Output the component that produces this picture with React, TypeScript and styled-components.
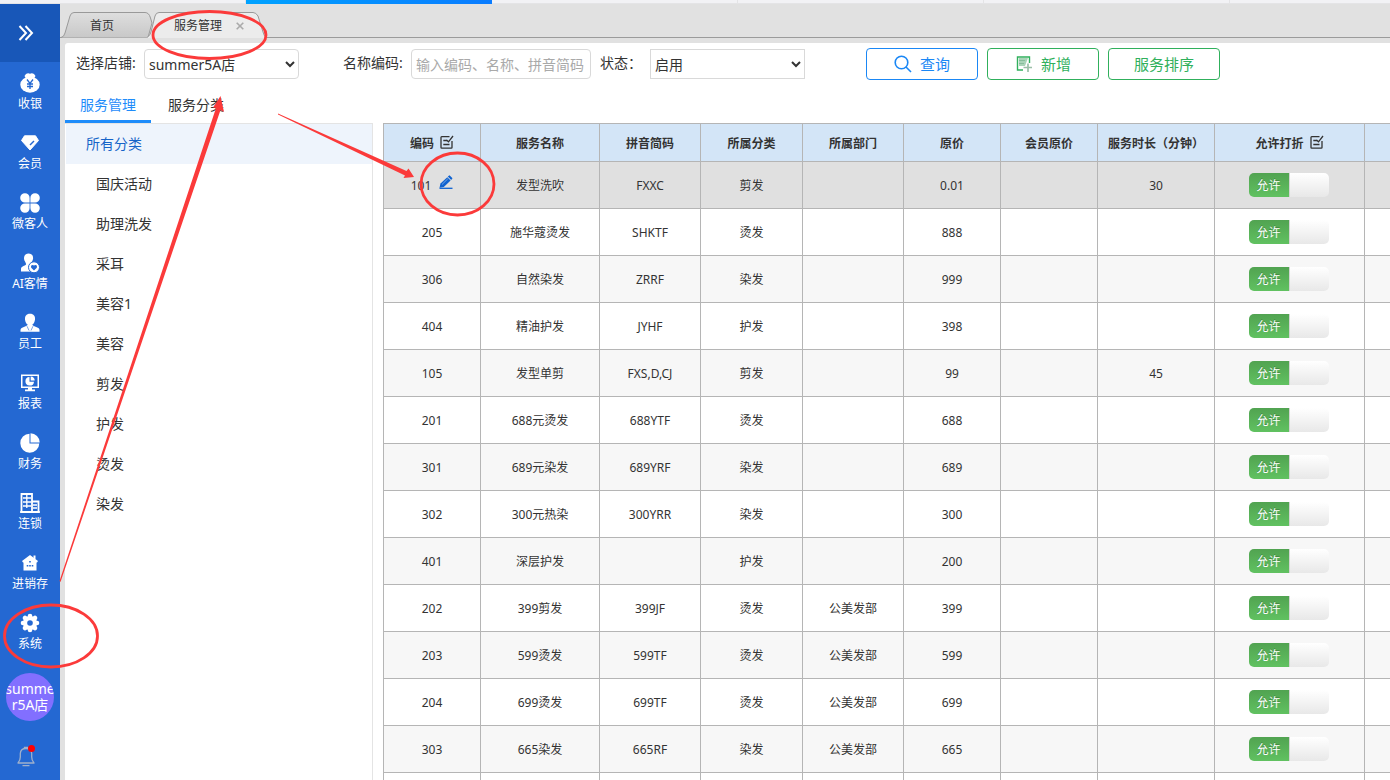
import React from 'react';
import styled, { createGlobalStyle, css } from 'styled-components';

const GlobalStyle = createGlobalStyle`
  * { box-sizing: border-box; }
  html, body, #root { height: 100%; }
  body {
    margin: 0;
    overflow: hidden;
    background: #e1e1e1;
    color: #333;
    font-family: "Noto Sans", "Noto Sans CJK SC", sans-serif;
    font-size: 14px;
    line-height: 20px;
  }
  button, input, select { font: inherit; color: inherit; margin: 0; }
  a { color: inherit; text-decoration: none; }
`;

const Page = styled.div`
  position: relative;
  display: flex;
  flex-direction: column;
  height: 100vh;
  overflow: hidden;
`;

const Strip = styled.div`
  display: flex;
  flex: none;
  height: 4px;
  background: #f2f2f5;
  overflow: hidden;
`;

const StripCell = styled.div<{ $active?: boolean }>`
  flex: none;
  width: 246px;
  border-bottom: 1px solid #e4e4e6;
  border-right: 1px solid #e4e4e6;
  ${p => p.$active && css`
    border: 0;
    background: linear-gradient(90deg, #00a2ff, #0a7cff);
  `}
`;

const Shell = styled.div`
  display: flex;
  flex: 1;
  min-height: 0;
`;

const Sidebar = styled.nav`
  display: flex;
  flex-direction: column;
  align-items: center;
  flex: none;
  width: 60px;
  background: #2468d2;
  color: #fff;
`;

const Expand = styled.button`
  display: flex;
  align-items: center;
  justify-content: center;
  flex: none;
  width: 100%;
  height: 58px;
  padding: 0 8px 0 0;
  border: 0;
  background: #1857b8;
  color: #fff;
`;

const NavItem = styled.a`
  display: flex;
  flex-direction: column;
  align-items: center;
  gap: 1px;
  flex: none;
  width: 100%;
  height: 60px;
  padding-top: 11px;
  font-size: 12px;
  white-space: nowrap;
  svg { display: block; flex: none; }
`;

const Avatar = styled.div`
  display: flex;
  justify-content: center;
  flex: none;
  width: 48px;
  height: 48px;
  margin-top: 11px;
  padding-top: 8px;
  border-radius: 50%;
  background: #826fff;
  overflow: hidden;
`;

const AvatarName = styled.span`
  flex: none;
  width: 54px;
  line-height: 16px;
  text-align: center;
  word-break: break-all;
`;

const Bell = styled.button`
  position: relative;
  margin: 24px 8px 0 0;
  padding: 0;
  border: 0;
  background: none;
  color: #9fb0cc;
  svg { display: block; }
`;

const BellDot = styled.span`
  position: absolute;
  top: 0;
  right: 0;
  width: 7px;
  height: 7px;
  border-radius: 50%;
  background: #f00;
`;

const Main = styled.main`
  display: flex;
  flex-direction: column;
  flex: 1;
  min-width: 0;
  padding-left: 5px;
`;

const TabBar = styled.div`
  display: flex;
  align-items: flex-end;
  flex: none;
  height: 34px;
  margin: 0 0 5px -5px;
  border-bottom: 1px solid #9b9b9b;
`;

const PageTab = styled.div<{ $active?: boolean }>`
  position: relative;
  display: flex;
  align-items: center;
  justify-content: center;
  gap: 14px;
  flex: none;
  width: ${p => (p.$active ? 120 : 92)}px;
  height: 26px;
  margin: 0 0 -1px ${p => (p.$active ? '-6px' : '1px')};
  padding: ${p => (p.$active ? '2px 0 0 4px' : '2px 10px 0 0')};
  font-size: 12px;
  z-index: ${p => (p.$active ? 1 : 0)};
`;

const TabShape = styled.svg`
  position: absolute;
  inset: 0;
  width: 100%;
  height: 100%;
`;

const TabLabel = styled.a`
  position: relative;
`;

const TabClose = styled.button`
  position: relative;
  padding: 0;
  border: 0;
  background: none;
  color: #aaa;
  svg { display: block; }
`;

const Panel = styled.section`
  display: flex;
  flex-direction: column;
  flex: 1;
  min-height: 0;
  background: #fff;
  border-top-left-radius: 3px;
`;

const Toolbar = styled.form`
  display: flex;
  align-items: center;
  flex: none;
  height: 42px;
  padding-left: 11px;
  white-space: nowrap;
`;

const FieldLabel = styled.label<{ $narrow?: boolean }>`
  flex: none;
  width: ${p => (p.$narrow ? 50 : 68)}px;
  padding-bottom: 2px;
`;

const controlStyle = css`
  flex: none;
  height: 30px;
  border: 1px solid #d9d9d9;
  background-color: #fff;
`;

const Select = styled.select<{ $square?: boolean; $gap: number }>`
  ${controlStyle}
  width: 155px;
  margin-right: ${p => p.$gap}px;
  padding: 0;
  border-radius: ${p => (p.$square ? 0 : 4)}px;
`;

const TextInput = styled.input`
  ${controlStyle}
  width: 180px;
  margin-right: 9px;
  padding: 0 4px;
  border-radius: 4px;
  &::placeholder { color: #a9a9a9; opacity: 1; }
`;

const Actions = styled.div`
  display: flex;
  gap: 9px;
`;

const ActionButton = styled.button<{ $primary?: boolean }>`
  display: flex;
  align-items: center;
  justify-content: center;
  gap: 8px;
  width: 112px;
  height: 32px;
  padding: 0;
  border: 1px solid ${p => (p.$primary ? '#1a87f5' : '#30b05c')};
  border-radius: 4px;
  background: #fff;
  color: ${p => (p.$primary ? '#1a87f5' : '#30b05c')};
  font-size: 15px;
`;

const SubTabs = styled.div`
  display: flex;
  flex: none;
  height: 38px;
`;

const SubTab = styled.a<{ $active?: boolean }>`
  height: 38px;
  padding: 10px 15px 0;
  margin-right: 2px;
  ${p => p.$active && css`
    color: #1e8cfa;
    border-bottom: 3px solid #1e8cfa;
  `}
`;

const Content = styled.div`
  display: flex;
  gap: 10px;
  flex: 1;
  min-height: 0;
`;

const Categories = styled.ul`
  flex: none;
  width: 308px;
  margin: 0;
  padding: 0 0 0 1px;
  border-top: 1px solid #e4e4e4;
  border-right: 1px solid #e4e4e4;
  list-style: none;
`;

const Category = styled.li<{ $root?: boolean }>`
  height: 40px;
  padding-left: ${p => (p.$root ? 20 : 30)}px;
  background: ${p => (p.$root ? '#eef4fc' : 'none')};
  color: ${p => (p.$root ? '#1664c8' : '#333')};
  line-height: 40px;
`;

const TableWrap = styled.div`
  flex: 1;
  min-width: 0;
  overflow: hidden;
`;

const Table = styled.table`
  width: 1131px;
  table-layout: fixed;
  border-collapse: collapse;
  font-size: 12px;
  text-align: center;
`;

const Th = styled.th`
  height: 38px;
  padding: 2px 0 0;
  border: 1px solid #b5b5b5;
  background: #d3e5f7;
  font-weight: 600;
  white-space: nowrap;
`;

const HeadCell = styled.span`
  display: inline-flex;
  align-items: flex-start;
  gap: 6px;
  svg { display: block; }
`;

const Tr = styled.tr<{ $selected?: boolean }>`
  background: #fff;
  &:nth-child(odd) { background: ${p => (p.$selected ? '#e0e0e0' : '#f7f7f7')}; }
`;

const Td = styled.td`
  height: 47px;
  padding: 2px 0 0;
  border: 1px solid #b5b5b5;
  white-space: nowrap;
`;

const SwitchTd = styled(Td)`
  padding: 0 2px 0 0;
`;

const CodeCell = styled.span`
  display: inline-flex;
  align-items: center;
  gap: 8px;
`;

const EditButton = styled.button`
  padding: 0 0 8px;
  border: 0;
  background: none;
  svg { display: block; }
`;

const Switch = styled.label`
  display: inline-grid;
  grid-template-columns: 40px 40px;
  height: 24px;
  border-radius: 5px;
  overflow: hidden;
  vertical-align: middle;
  line-height: 26px;
`;

const SwitchInput = styled.input`
  grid-area: 1 / 1 / 2 / 3;
  appearance: none;
`;

const SwitchOn = styled.span`
  grid-area: 1 / 1;
  background: linear-gradient(#51a351, #62c462);
  color: #fff;
  text-shadow: 0 -1px 0 rgba(0, 0, 0, 0.25);
`;

const SwitchKnob = styled.span`
  grid-area: 1 / 2;
  border-left: 1px solid #d4d4d4;
  background: linear-gradient(#fff, #e6e6e6);
`;

const Annotations = styled.svg`
  position: absolute;
  top: 0;
  left: 0;
  pointer-events: none;
  z-index: 5;
`;

const BG = '#2468d2';

const icons: Record<string, React.ReactNode> = {
  cash: (
    <>
      <path d="M6 1 Q8 -.3 10 .7 Q12 -.3 14 1 L15.500 3 L14 5.500 H6 L4.500 3Z" fill="#fff" />
      <ellipse cx="10" cy="11.700" rx="9.700" ry="8" fill="#fff" />
      <path d="M7 6.500 L10 10.500 L13 6.500 M10 10.500 V16 M7 11 H13 M7 13.500 H13" fill="none" stroke={BG} strokeWidth="1.300" />
    </>
  ),
  member: (
    <>
      <path d="M4.500 2.800 H15.500 L18.500 7.500 L10 17 L1.500 7.500Z" fill="#fff" stroke="#fff" strokeLinejoin="round" />
      <path d="M10 12 L14 8" stroke={BG} strokeWidth="1.400" />
    </>
  ),
  wechat: (
    <g fill="#fff">
      <path d="M9.600 9.600 H5 A4.700 4.700 0 1 1 9.600 5Z" />
      <path d="M10.400 9.600 H15 A4.700 4.700 0 1 0 10.400 5Z" />
      <path d="M9.600 10.400 H5 A4.700 4.700 0 1 0 9.600 15Z" />
      <path d="M10.400 10.400 H15 A4.700 4.700 0 1 1 10.400 15Z" />
    </g>
  ),
  ai: (
    <>
      <path d="M8.500 .5 C12 .5 13.500 3 13 6 C12.700 8 11.500 9 11 10.500 L14 13 V18.500 H1 V16 C1 13 5 13 6 11.500 C6.500 10 4 8 4 5.500 C4 2.500 5.500 .5 8.500 .5Z" fill="#fff" />
      <circle cx="14" cy="14.300" r="5.500" fill="#fff" stroke={BG} />
      <path d="M14 17.500 L11.200 14.700 Q10.500 12.200 12.500 12 Q13.500 12 14 12.500 Q14.500 12 15.500 12 Q17.500 12.200 16.800 14.700Z" fill={BG} />
    </>
  ),
  staff: (
    <>
      <path d="M10 .8 C13.800 .8 15.300 3.300 15 6.500 C14.700 9.500 12.700 12.500 10 12.500 C7.300 12.500 5.300 9.500 5 6.500 C4.700 3.300 6.200 .8 10 .8Z" fill="#fff" />
      <path d="M.5 18.700 V17 C.5 14 5.500 14 7.500 12 H12.500 C14.500 14 19.500 14 19.500 17 V18.700Z" fill="#fff" />
      <path d="M7 13.200 L9 17.500 M13 13.200 L11 17.500" stroke={BG} strokeWidth=".6" />
    </>
  ),
  report: (
    <>
      <path d="M1 1.500 H19 V15 H1Z" fill="#fff" />
      <path d="M2.500 3 H17.500 V13.500 H2.500Z" fill={BG} />
      <path d="M9.500 4 A4.300 4.300 0 1 0 14 8.700 H9.500Z" fill="#fff" />
      <path d="M10.700 3.400 A4.300 4.300 0 0 1 14.700 7.600 H10.700Z" fill="#fff" />
      <path d="M8 15 H12 V16.500 H15 V18.200 H5 V16.500 H8Z" fill="#fff" />
    </>
  ),
  finance: (
    <>
      <path d="M9.500 .7 V10.500 H19.300 A9.500 9.500 0 1 1 9.500 .7Z" fill="#fff" />
      <path d="M10.500 .3 A9.200 9.200 0 0 1 19.700 9.500 H10.500Z" fill="#fff" />
    </>
  ),
  chain: (
    <g fill="none" stroke="#fff">
      <path d="M1.500 1 H12 V19 H1.500Z" strokeWidth="1.800" />
      <path d="M12 8.500 H18.500 V19 H12" strokeWidth="1.800" />
      <path d="M3 5 H11 M3 9 H11 M3 13 H11 M6.800 2 V15 M13 12 H17 M13 15 H17" strokeWidth="1.300" />
      <path d="M0 19 H20" strokeWidth="1.600" />
    </g>
  ),
  stock: (
    <>
      <path d="M10 2 L18 8 L17 9.500 H16.500 V17.500 H3.500 V9.500 H3 L2 8Z" fill="#fff" />
      <path d="M13.500 2.500 H15.500 V6 H13.500Z" fill="#fff" />
      <path d="M9.200 8 H10.800 V9.600 H9.200Z M6.700 12 H8.300 V13.600 H6.700Z M9.200 12 H10.800 V13.600 H9.200Z M11.700 12 H13.300 V13.600 H11.700Z" fill={BG} />
    </>
  ),
  system: (
    <>
      <g stroke="#fff" strokeWidth="4.600" strokeLinecap="round">
        <path d="M10 3 V17 M3 10 H17 M5 5 L15 15 M15 5 L5 15" />
      </g>
      <circle cx="10" cy="10" r="7" fill="#fff" />
      <circle cx="10" cy="10" r="2.800" fill={BG} />
    </>
  ),
};

const navItems = [
  ['cash', '收银'], ['member', '会员'], ['wechat', '微客人'], ['ai', 'AI客情'], ['staff', '员工'],
  ['report', '报表'], ['finance', '财务'], ['chain', '连锁'], ['stock', '进销存'], ['system', '系统'],
];

const categories = ['国庆活动', '助理洗发', '采耳', '美容1', '美容', '剪发', '护发', '烫发', '染发'];

const columns = [
  { title: '编码', width: 97, editable: true },
  { title: '服务名称', width: 119 },
  { title: '拼音简码', width: 101 },
  { title: '所属分类', width: 102 },
  { title: '所属部门', width: 101 },
  { title: '原价', width: 97 },
  { title: '会员原价', width: 97 },
  { title: '服务时长（分钟）', width: 117 },
  { title: '允许打折', width: 150, editable: true },
  { title: '', width: 150 },
];

const rows = [
  ['101', '发型洗吹', 'FXXC', '剪发', '', '0.01', '', '30'],
  ['205', '施华蔻烫发', 'SHKTF', '烫发', '', '888', '', ''],
  ['306', '自然染发', 'ZRRF', '染发', '', '999', '', ''],
  ['404', '精油护发', 'JYHF', '护发', '', '398', '', ''],
  ['105', '发型单剪', 'FXS,D,CJ', '剪发', '', '99', '', '45'],
  ['201', '688元烫发', '688YTF', '烫发', '', '688', '', ''],
  ['301', '689元染发', '689YRF', '染发', '', '689', '', ''],
  ['302', '300元热染', '300YRR', '染发', '', '300', '', ''],
  ['401', '深层护发', '', '护发', '', '200', '', ''],
  ['202', '399剪发', '399JF', '烫发', '公美发部', '399', '', ''],
  ['203', '599烫发', '599TF', '烫发', '公美发部', '599', '', ''],
  ['204', '699烫发', '699TF', '烫发', '公美发部', '699', '', ''],
  ['303', '665染发', '665RF', '染发', '公美发部', '665', '', ''],
];

const EditMark = () => (
  <svg width="14" height="16" viewBox="0 0 14 16" fill="none" stroke="#333" strokeWidth="1.300">
    <path d="M9.500 2.700 H1.700 Q1 2.700 1 3.400 V13.500 Q1 14.200 1.700 14.200 H11.300 Q12 14.200 12 13.500 V7" />
    <path d="M3.300 6.500 H7 M3.300 10.500 H9.500" />
    <path d="M6.500 6 L8.500 7.800 L13 2" />
  </svg>
);

const Pencil = () => (
  <svg width="14" height="14" viewBox="0 0 14 14">
    <path d="M8.300 2.200 L11.600 5.400 L4.800 12 L.5 12.800 L1.500 8.500Z" fill="#0f62d0" />
    <path d="M8.800 1.600 L10.500 .2 L13.500 3.200 L12.200 4.900Z" fill="#0f62d0" />
    <path d="M3 9.500 L8.800 3.800" stroke="#8db6ea" strokeWidth=".8" />
    <path d="M.5 13.300 H13.500" stroke="#0f62d0" strokeWidth="1.300" />
  </svg>
);

export default function App() {
  return (
    <Page>
      <GlobalStyle />
      <Strip>
        {[0, 1, 2, 3, 4, 5].map(i => <StripCell key={i} $active={i === 1} />)}
      </Strip>
      <Shell>
        <Sidebar>
          <Expand type="button" aria-label="展开">
            <svg width="16" height="16" viewBox="0 0 16 16" fill="none" stroke="#fff" strokeWidth="2">
              <path d="M1.500 1 L8 8 L1.500 15 M7.500 1 L14 8 L7.500 15" />
            </svg>
          </Expand>
          {navItems.map(([key, label]) => (
            <NavItem key={key} href="#">
              <svg width="20" height="20" viewBox="0 0 20 20">{icons[key]}</svg>
              {label}
            </NavItem>
          ))}
          <Avatar><AvatarName>summer5A店</AvatarName></Avatar>
          <Bell type="button" aria-label="通知">
            <svg width="18" height="22" viewBox="0 0 18 22" fill="none" stroke="currentColor" strokeWidth="1.300">
              <path d="M1 18 Q3.300 15.500 3.300 12 V8.500 Q3.500 3.500 9 3.500 Q14.500 3.500 14.700 8.500 V12 Q14.700 15.500 17 18Z" strokeLinejoin="round" />
              <path d="M7.500 3.500 V2.300 H10.500 V3.500 M5.500 20.700 H12.500" />
            </svg>
            <BellDot />
          </Bell>
        </Sidebar>
        <Main>
          <TabBar>
            <PageTab>
              <TabShape viewBox="0 0 92 26" preserveAspectRatio="none">
                <defs>
                  <linearGradient id="tabIdle" x1="0" y1="0" x2="0" y2="1">
                    <stop offset="0" stopColor="#dedede" />
                    <stop offset="1" stopColor="#c8c8c8" />
                  </linearGradient>
                </defs>
                <path d="M0 25.500 Q3 25 4 21 L9 4 Q10 .5 13 .5 H84 Q88 .5 89.500 6 L91 11 L87 25.500" fill="url(#tabIdle)" stroke="#999" />
              </TabShape>
              <TabLabel href="#">首页</TabLabel>
            </PageTab>
            <PageTab $active>
              <TabShape viewBox="0 0 120 26" preserveAspectRatio="none">
                <path d="M0 25.500 Q3 24 4 20 L8 4 Q9 .5 12 .5 H106 Q109 .5 111 4 L116 20 Q117 25 120 25.500 V26 H0Z" fill="#ececec" />
                <path d="M0 25.500 Q3 24 4 20 L8 4 Q9 .5 12 .5 H106 Q109 .5 111 4 L116 20 Q117 25 120 25.500" fill="none" stroke="#999" />
              </TabShape>
              <TabLabel href="#">服务管理</TabLabel>
              <TabClose type="button" aria-label="关闭">
                <svg width="8" height="8" viewBox="0 0 8 8" stroke="#aaa" strokeWidth="1.600">
                  <path d="M.7 .7 L7.300 7.300 M7.300 .7 L.7 7.300" />
                </svg>
              </TabClose>
            </PageTab>
          </TabBar>
          <Panel>
            <Toolbar onSubmit={e => e.preventDefault()}>
              <FieldLabel htmlFor="shop">选择店铺:</FieldLabel>
              <Select id="shop" $gap={44}><option>summer5A店</option></Select>
              <FieldLabel htmlFor="keyword">名称编码:</FieldLabel>
              <TextInput id="keyword" placeholder="输入编码、名称、拼音简码" />
              <FieldLabel htmlFor="status" $narrow>状态：</FieldLabel>
              <Select id="status" $square $gap={61}><option>启用</option><option>停用</option></Select>
              <Actions>
                <ActionButton $primary>
                  <svg width="18" height="18" viewBox="0 0 18 18" fill="none" stroke="currentColor" strokeWidth="1.600">
                    <circle cx="7.500" cy="7.500" r="6.300" />
                    <path d="M12 12 L17 17" />
                  </svg>
                  查询
                </ActionButton>
                <ActionButton type="button">
                  <svg width="18" height="18" viewBox="0 0 18 18" fill="none" stroke="#30b05c">
                    <path d="M8 15 H2.500 V2 H14.500 V8" strokeWidth="1.400" />
                    <path d="M4 3 H13 L10 11 H4Z" fill="#a9d4b8" stroke="none" />
                    <path d="M4 5.500 H10 M4 8.500 H9" stroke="#7fb894" strokeWidth=".8" />
                    <path d="M8.500 12.500 H17 M13 8.500 V17" stroke="#9bbfa8" strokeWidth="1.700" />
                  </svg>
                  新增
                </ActionButton>
                <ActionButton type="button">服务排序</ActionButton>
              </Actions>
            </Toolbar>
            <SubTabs>
              <SubTab href="#" $active>服务管理</SubTab>
              <SubTab href="#">服务分类</SubTab>
            </SubTabs>
            <Content>
              <Categories>
                <Category $root><a href="#">所有分类</a></Category>
                {categories.map(c => <Category key={c}><a href="#">{c}</a></Category>)}
              </Categories>
              <TableWrap>
                <Table>
                  <colgroup>
                    {columns.map((c, i) => <col key={i} width={c.width} />)}
                  </colgroup>
                  <thead>
                    <tr>
                      {columns.map((c, i) => (
                        <Th key={i}><HeadCell>{c.title}{c.editable && <EditMark />}</HeadCell></Th>
                      ))}
                    </tr>
                  </thead>
                  <tbody>
                    {rows.map((row, r) => (
                      <Tr key={row[0]} $selected={r === 0}>
                        {row.map((cell, i) => (
                          <Td key={i}>
                            {r === 0 && i === 0
                              ? <CodeCell>{cell}<EditButton type="button" aria-label="编辑"><Pencil /></EditButton></CodeCell>
                              : cell}
                          </Td>
                        ))}
                        <SwitchTd>
                          <Switch>
                            <SwitchOn>允许</SwitchOn>
                            <SwitchKnob />
                            <SwitchInput type="checkbox" defaultChecked />
                          </Switch>
                        </SwitchTd>
                        <Td />
                      </Tr>
                    ))}
                    <Tr>{columns.map((_, i) => <Td key={i} />)}</Tr>
                  </tbody>
                </Table>
              </TableWrap>
            </Content>
          </Panel>
        </Main>
      </Shell>
      <Annotations width="520" height="700" viewBox="0 0 520 700" fill="none" stroke="#fb3a3a" strokeWidth="2.800">
        <ellipse cx="209.500" cy="35" rx="56.500" ry="23.500" />
        <ellipse cx="457.500" cy="184" rx="36.500" ry="31" />
        <ellipse cx="51" cy="636" rx="46.500" ry="31" />
        <g fill="#fb3a3a" stroke="none">
          <path d="M59.500 581 L216 108 L213 107.500 L220.500 96 L224 112 L220.500 110 L60.500 582Z" />
          <path d="M278 113.500 L406.500 171 L408.500 168.500 L414 177 L403.500 178 L405 175.500 L278 114.500Z" />
        </g>
      </Annotations>
    </Page>
  );
}
